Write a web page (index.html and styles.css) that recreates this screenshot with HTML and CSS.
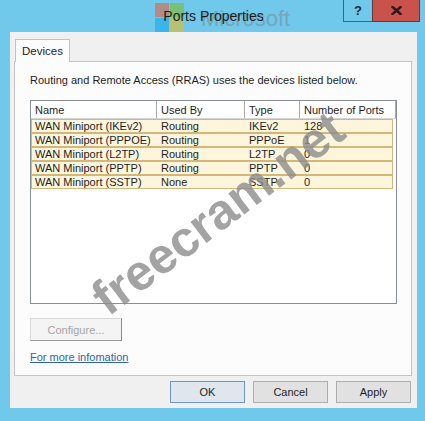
FILE: index.html
```html
<!DOCTYPE html>
<html>
<head>
<meta charset="utf-8">
<link rel="stylesheet" href="styles.css">
</head>
<body>
<div class="window">
  <div class="titlebar">
    <div class="ms-mark">
      <div class="ms-logo"><i class="q red"></i><i class="q green"></i><i class="q blue"></i><i class="q yellow"></i></div>
      <span class="ms-text">Microsoft</span>
    </div>
    <span class="title">Ports Properties</span>
    <div class="caption">
      <span class="cap help">?</span>
      <span class="cap close"><svg width="11" height="9" viewBox="0 0 11 9"><path d="M1.5 1 L9.5 8 M9.5 1 L1.5 8" stroke="#2a1818" stroke-width="2.4" stroke-linecap="square"/></svg></span>
    </div>
  </div>
  <div class="client">
    <div class="tabs"><div class="tab">Devices</div></div>
    <div class="panel">
      <p class="desc">Routing and Remote Access (RRAS) uses the devices listed below.</p>
      <div class="listview">
        <div class="lv-header">
          <span class="hc">Name</span><span class="hc">Used By</span><span class="hc">Type</span><span class="hc">Number of Ports</span>
        </div>
        <div class="lv-body">
          <div class="row"><span>WAN Miniport (IKEv2)</span><span>Routing</span><span>IKEv2</span><span>128</span></div>
          <div class="row"><span>WAN Miniport (PPPOE)</span><span>Routing</span><span>PPPoE</span><span>1</span></div>
          <div class="row"><span>WAN Miniport (L2TP)</span><span>Routing</span><span>L2TP</span><span>0</span></div>
          <div class="row"><span>WAN Miniport (PPTP)</span><span>Routing</span><span>PPTP</span><span>0</span></div>
          <div class="row"><span>WAN Miniport (SSTP)</span><span>None</span><span>SSTP</span><span>0</span></div>
        </div>
      </div>
      <button class="btn configure" disabled>Configure...</button>
      <a class="link" href="#">For more infomation</a>
    </div>
    <div class="actions">
      <button class="btn default">OK</button>
      <button class="btn">Cancel</button>
      <button class="btn">Apply</button>
    </div>
  </div>
  <div class="watermark">freecram.net</div>
</div>
</body>
</html>
```
FILE: styles.css
```css
body {
  margin: 0;
}
.window {
  width: 425px;
  height: 421px;
  box-sizing: border-box;
  background: #70c8ea;
  padding: 0 8px 13px 10px;
  display: flex;
  flex-direction: column;
  position: relative;
  overflow: hidden;
  font-family: "Liberation Sans", Arial, sans-serif;
  font-size: 11px;
  color: #1e1e1e;
}
.titlebar {
  height: 32px;
  display: grid;
  grid-template-columns: 1fr auto 1fr;
  position: relative;
}
.ms-mark {
  position: absolute;
  left: 145px;
  top: 3px;
  display: flex;
  align-items: flex-end;
  gap: 17px;
  opacity: 0.5;
}
.ms-logo {
  display: grid;
  grid-template-columns: 14px 14px;
  grid-template-rows: 14px 14px;
  gap: 1px;
}
.q { display: block; }
.red { background: #f25022; }
.green { background: #7fba00; }
.blue { background: #00a4ef; }
.yellow { background: #ffb900; }
.ms-text {
  font-size: 22px;
  color: #7a8388;
  line-height: 26px;
}
.title {
  grid-column: 2;
  align-self: center;
  font-size: 14px;
  color: #1a1a1a;
  position: relative;
  z-index: 1;
}
.caption {
  grid-column: 3;
  justify-self: end;
  align-self: start;
  display: flex;
  margin-right: -3px;
}
.cap {
  height: 22px;
  box-sizing: border-box;
  display: flex;
  align-items: center;
  justify-content: center;
}
.help {
  width: 29px;
  border: 1px solid #3d6780;
  border-top: none;
  border-right: none;
  font-weight: bold;
  font-size: 13px;
  color: #1c2a38;
}
.close {
  width: 48px;
  background: #c9534c;
  border: 1px solid #5e3a3a;
  border-top: none;
}
.client {
  flex: 1;
  background: #f0f0f0;
  padding-top: 7px;
  display: flex;
  flex-direction: column;
}
.tabs {
  display: flex;
  padding-left: 5px;
  position: relative;
  z-index: 1;
}
.tab {
  width: 55px;
  height: 23px;
  box-sizing: border-box;
  background: #fcfcfc;
  border: 1px solid #c2c2c2;
  border-bottom: none;
  padding: 5px 0 0 6px;
  font-size: 11.5px;
  margin-bottom: -1px;
}
.panel {
  margin: 0 5px 0 4px;
  height: 315px;
  box-sizing: border-box;
  background: #fcfcfc;
  border: 1px solid #c4c4c4;
  padding: 11px 14px 0 15px;
}
.desc {
  margin: 0;
  line-height: 14px;
}
.listview {
  margin-top: 13px;
  height: 204px;
  box-sizing: border-box;
  border: 1px solid #8a8f96;
  background: #fff;
}
.lv-header {
  display: grid;
  grid-template-columns: 126px 88px 55px 96px;
  height: 18px;
  box-sizing: border-box;
  border-bottom: 1px solid #d5d5d5;
}
.hc {
  border-right: 1px solid #a8a8a8;
  padding: 3px 0 0 4px;
  line-height: 13px;
  white-space: nowrap;
}
.row {
  width: 362px;
  height: 14px;
  box-sizing: border-box;
  border: 1px solid #d3b779;
  background: #fdf6dc;
  display: grid;
  grid-template-columns: 125px 88px 55px 92px;
  line-height: 12px;
  white-space: nowrap;
}
.row span { padding-left: 4px; }
.row span:first-child { padding-left: 3px; }
.btn {
  font-family: "Liberation Sans", Arial, sans-serif;
  font-size: 11px;
  width: 75px;
  height: 22px;
  box-sizing: border-box;
  background: #e1e1e1;
  border: 1px solid #adadad;
  color: #1e1e1e;
  padding: 0;
}
.btn.default {
  background: #e0e6ee;
  border-color: #6f95c4;
}
.configure {
  display: block;
  margin-top: 14px;
  width: 92px;
  height: 23px;
  background: #f4f4f4;
  border: 1px solid #d8d8d8;
  border-right-color: #8a8a8a;
  border-bottom-color: #9a9a9a;
  color: #a4a4a4;
}
.link {
  display: block;
  width: fit-content;
  margin-top: 10px;
  line-height: 13px;
  color: #2f64a8;
  text-decoration: underline;
}
.actions {
  margin-top: 5px;
  display: flex;
  justify-content: flex-end;
  gap: 8px;
  padding-right: 6px;
}
.watermark {
  position: absolute;
  left: 218px;
  top: 213px;
  transform: translate(-50%, -50%) rotate(-37deg);
  font-size: 50px;
  font-weight: bold;
  color: rgba(140, 140, 140, 0.8);
  white-space: nowrap;
  pointer-events: none;
}
```
